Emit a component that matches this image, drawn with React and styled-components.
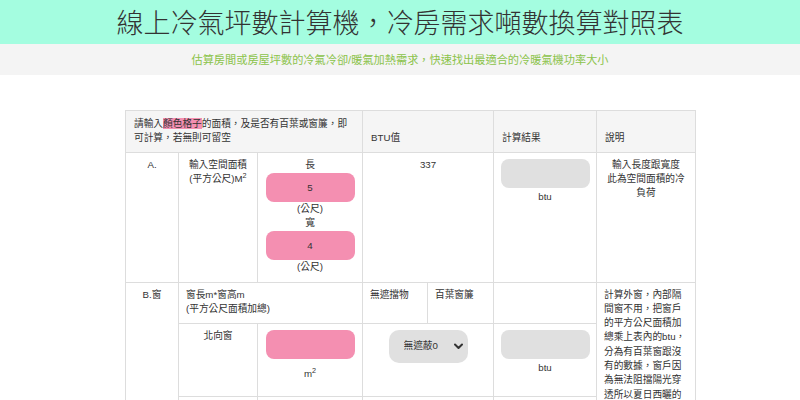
import React from "react";
import styled, { createGlobalStyle } from "styled-components";

const Global = createGlobalStyle`
  html, body { margin: 0; padding: 0; overflow: hidden; background: #fff; }
  body {
    font-family: "Liberation Sans", "Noto Sans CJK TC", sans-serif;
    color: #333;
  }
  sup { font-size: 75%; line-height: 0; position: relative; vertical-align: baseline; top: -0.5em; }
`;

const Banner = styled.header`
  background: #a4fde0;
  height: 44px;
  display: flex;
  align-items: center;
  justify-content: center;
`;

const Title = styled.h1`
  margin: 0;
  font-family: "Noto Sans CJK TC", sans-serif;
  font-weight: 300;
  font-size: 27px;
  line-height: 44px;
  color: #333;
`;

const SubBar = styled.div`
  background: #f4f4f4;
  height: 31px;
  display: flex;
  align-items: center;
  justify-content: center;
`;

const Subtitle = styled.p`
  margin: 2px 0 0;
  font-size: 11.2px;
  line-height: 29px;
  color: #8bc34a;
`;

const Main = styled.main`
  padding: 35px 0 0 125px;
`;

const Table = styled.table`
  width: 570px;
  border-collapse: collapse;
  table-layout: fixed;
  font-size: 9.7px;
  line-height: 14.3px;
  border: 1px solid #ddd;
`;

const Th = styled.th`
  border: 1px solid #ddd;
  background: #f5f5f5;
  padding: 6px 8px 6px;
  text-align: left;
  vertical-align: bottom;
  font-weight: normal;
`;

const Td = styled.td`
  border: 1px solid #ddd;
  padding: 5px 7px;
  vertical-align: top;
  text-align: ${(p) => p.$align || "center"};
`;

const Row = styled.tr`
  height: ${(p) => (p.$h ? `${p.$h}px` : "auto")};
`;

const Mark = styled.span`
  background: #f48fb1;
`;

const Line = styled.div``;

const Unit = styled.div`
  margin-top: ${(p) => p.$gap || 0}px;
`;

const PinkInput = styled.input`
  display: block;
  box-sizing: border-box;
  width: 89px;
  height: 29px;
  margin: 1px auto 0;
  padding: 0;
  border: none;
  border-radius: 8px;
  background: #f48fb1;
  color: #333;
  font: inherit;
  text-align: center;
  outline: none;
`;

const ResultBox = styled.input`
  display: block;
  box-sizing: border-box;
  width: 89px;
  height: 29px;
  margin: 1px auto 0;
  padding: 0;
  border: none;
  border-radius: 8px;
  background: #e0e0e0;
  font: inherit;
  outline: none;
`;

const SelectWrap = styled.div`
  position: relative;
  width: 79px;
  margin: 1px auto 0;
`;

const Select = styled.select`
  appearance: none;
  -webkit-appearance: none;
  display: block;
  width: 100%;
  height: 33px;
  border: none;
  border-radius: 10px;
  background: #e0e0e0;
  padding: 0 0 0 15px;
  color: #333;
  font: inherit;
  outline: none;
`;

const Chevron = styled.svg`
  position: absolute;
  right: 5px;
  top: 50%;
  margin-top: -3.5px;
  width: 9px;
  height: 7px;
  pointer-events: none;
`;

function ShadeSelect() {
  return (
    <SelectWrap>
      <Select defaultValue="0">
        <option value="0">無遮蔽0</option>
        <option value="1">百葉窗簾</option>
      </Select>
      <Chevron viewBox="0 0 9 7">
        <path d="M1 1.5 L4.5 5 L8 1.5" fill="none" stroke="#333" strokeWidth="2" strokeLinecap="round" strokeLinejoin="round" />
      </Chevron>
    </SelectWrap>
  );
}

function WindowRow({ name }) {
  return (
    <Row $h={73}>
      <Td>{name}</Td>
      <Td>
        <PinkInput defaultValue="" />
        <Unit $gap={8}>
          m<sup>2</sup>
        </Unit>
      </Td>
      <Td colSpan={2}>
        <ShadeSelect />
      </Td>
      <Td>
        <ResultBox readOnly defaultValue="" />
        <Unit $gap={2}>btu</Unit>
      </Td>
    </Row>
  );
}

export default function App() {
  return (
    <>
      <Global />
      <Banner>
        <Title>線上冷氣坪數計算機，冷房需求噸數換算對照表</Title>
      </Banner>
      <SubBar>
        <Subtitle>估算房間或房屋坪數的冷氣冷卻/暖氣加熱需求，快速找出最適合的冷暖氣機功率大小</Subtitle>
      </SubBar>
      <Main>
        <Table>
          <colgroup>
            <col style={{ width: 53 }} />
            <col style={{ width: 79 }} />
            <col style={{ width: 105 }} />
            <col style={{ width: 65 }} />
            <col style={{ width: 66 }} />
            <col style={{ width: 103 }} />
            <col style={{ width: 99 }} />
          </colgroup>
          <thead>
            <tr>
              <Th colSpan={3}>
                請輸入<Mark>顏色格子</Mark>的面積，及是否有百葉或窗簾，即可計算，若無則可留空
              </Th>
              <Th colSpan={2}>BTU值</Th>
              <Th>計算結果</Th>
              <Th>說明</Th>
            </tr>
          </thead>
          <tbody>
            <Row $h={130}>
              <Td>A.</Td>
              <Td>
                輸入空間面積
                <br />
                (平方公尺)M<sup>2</sup>
              </Td>
              <Td>
                <Line>長</Line>
                <PinkInput defaultValue="5" />
                <Line>(公尺)</Line>
                <Line>寬</Line>
                <PinkInput defaultValue="4" />
                <Line>(公尺)</Line>
              </Td>
              <Td colSpan={2}>337</Td>
              <Td>
                <ResultBox readOnly defaultValue="" />
                <Unit $gap={2}>btu</Unit>
              </Td>
              <Td>
                輸入長度跟寬度
                <br />
                此為空間面積的冷負荷
              </Td>
            </Row>
            <Row $h={41}>
              <Td rowSpan={5}>B.窗</Td>
              <Td colSpan={2} $align="left">
                窗長m*窗高m
                <br />
                (平方公尺面積加總)
              </Td>
              <Td $align="left">無遮擋物</Td>
              <Td $align="left">百葉窗簾</Td>
              <Td />
              <Td rowSpan={5} $align="left">
                計算外窗，內部隔間窗不用，把窗戶的平方公尺面積加總乘上表內的btu，分為有百葉窗跟沒有的數據，窗戶因為無法阻擋陽光穿透所以夏日西曬的窗戶熱負荷最高
              </Td>
            </Row>
            <WindowRow name="北向窗" />
            <WindowRow name="東向窗" />
            <WindowRow name="南向窗" />
            <WindowRow name="西向窗" />
          </tbody>
        </Table>
      </Main>
    </>
  );
}
